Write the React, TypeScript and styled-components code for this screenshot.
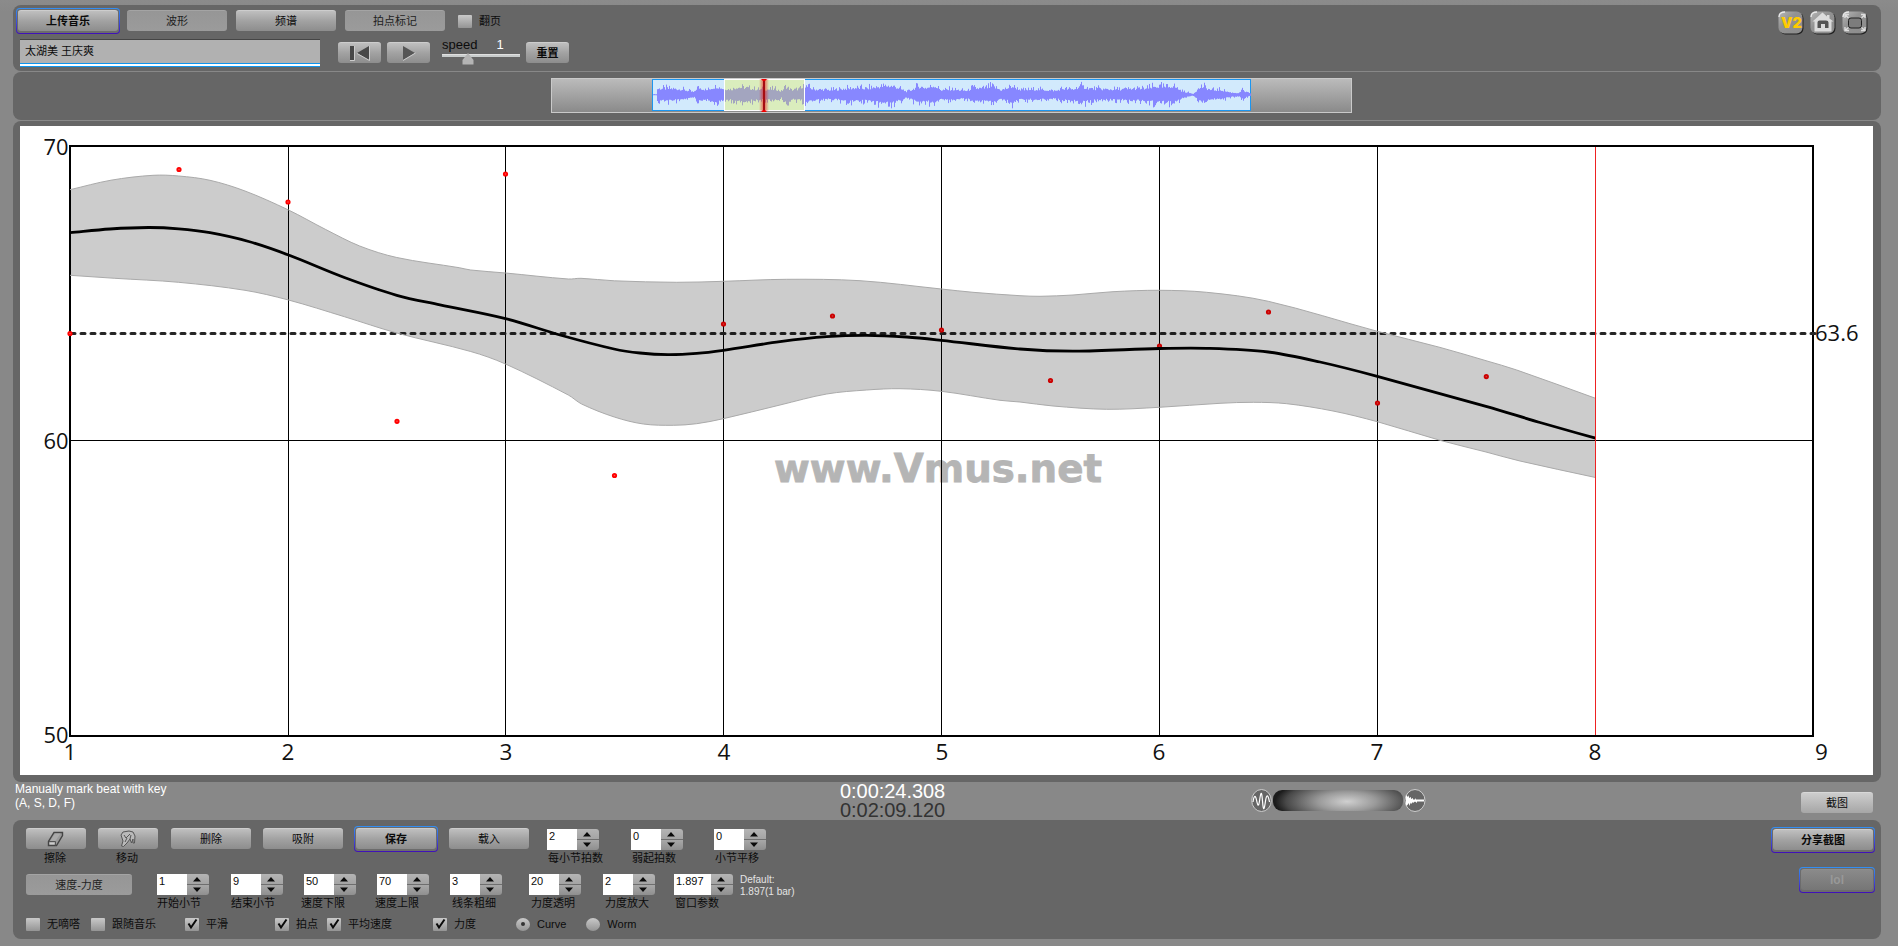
import styled, { createGlobalStyle, css } from 'styled-components';

const GlobalStyle = createGlobalStyle`
  body {
    margin: 0;
    background: #888;
    font-family: 'Liberation Sans', 'Noto Sans CJK SC', sans-serif;
    font-size: 11px;
    color: #0c0c0c;
    overflow: hidden;
  }
  * {
    box-sizing: border-box;
  }
`;

const Page = styled.div`
  width: 1898px;
  height: 946px;
  padding: 5px 17px 0 13px;
  display: flex;
  flex-direction: column;
  background: linear-gradient(#8b8b8b, #888 12px);
`;
const Panel = styled.section<{ $height: number; $gap?: number }>`
  height: ${({ $height }) => $height}px;
  margin-bottom: ${({ $gap }) => $gap ?? 0}px;
  flex-shrink: 0;
  border-radius: 8px;
  background: #666;
`;

const Header = styled(Panel)`
  display: flex;
  justify-content: space-between;
  padding: 3px 13px 0 3px;
`;
const HeaderRow = styled.div<{ $top?: number }>`
  display: flex;
  align-items: flex-start;
  margin-top: ${({ $top }) => $top ?? 0}px;
`;
const IconBar = styled.div`
  display: flex;
  gap: 6px;
  padding-top: 3px;
`;

const face = {
  up: css`
    background: linear-gradient(#bfbfbf, #a2a2a2 50%, #8d8d8d);
    border-top: 1px solid #cdcdcd;
  `,
  flat: css`
    background: linear-gradient(#969696, #9b9b9b);
    border-top: 1px solid #a4a4a4;
  `,
  bright: css`
    background: linear-gradient(#cdcdcd, #a6a6a6);
    border-top: 1px solid #d8d8d8;
  `,
  off: css`
    background: linear-gradient(#8a8a8a, #767676);
    border-top: 1px solid #8e8e8e;
    font-size: 12px;
  `,
};
const faceColor = { up: '#0a0a0a', flat: '#222', bright: '#0a0a0a', off: '#989898' };

const Button = styled.button<{
  $width: number;
  $left?: number;
  $top?: number;
  $face?: keyof typeof face;
  $bold?: boolean;
}>`
  width: ${({ $width }) => $width}px;
  height: 21px;
  margin: ${({ $top }) => $top ?? 0}px 0 0 ${({ $left }) => $left ?? 0}px;
  padding: 0;
  flex-shrink: 0;
  display: flex;
  align-items: center;
  justify-content: center;
  border: 0;
  border-radius: 3px;
  font: inherit;
  line-height: 16px;
  font-weight: ${({ $bold }) => ($bold ? 700 : 400)};
  color: ${({ $face }) => faceColor[$face ?? 'up']};
  ${({ $face }) => face[$face ?? 'up']}
`;
const Frame = styled.div<{ $left?: number; $top?: number }>`
  margin: ${({ $top }) => $top ?? 0}px 0 0 ${({ $left }) => $left ?? 0}px;
  padding: 1px;
  border-radius: 4px;
  background: linear-gradient(#3290f4, #3c4fdc 55%, #400fb8);
`;
const FrameInner = styled.div`
  padding: 1px 1px 2px;
  border-radius: 3px;
  background: #6c6c6c;
`;

const CheckLabel = styled.label<{ $left: number; $top?: number }>`
  display: flex;
  align-items: center;
  gap: 7px;
  height: 14px;
  line-height: 14px;
  white-space: nowrap;
  margin: ${({ $top }) => $top ?? 0}px 0 0 ${({ $left }) => $left}px;
`;
const CheckBox = styled.span<{ $round?: boolean }>`
  width: 14px;
  height: 13px;
  display: flex;
  align-items: center;
  justify-content: center;
  border-radius: ${({ $round }) => ($round ? '50%' : '1px')};
  background: linear-gradient(#c9c9c9, #949494);
`;
const RadioDot = styled.span`
  width: 4px;
  height: 4px;
  border-radius: 50%;
  background: #333;
`;

const SongName = styled.div`
  width: 300px;
  height: 28px;
  margin-left: 4px;
  padding: 3px 5px;
  border-top: 1px solid #454545;
  line-height: 16px;
  background: linear-gradient(#0f95ee 0 1px, #fff 1px 3px, #0f95ee 3px 4px) bottom / 100% 4px no-repeat #b1b1b1;
`;
const Speed = styled.div`
  width: 78px;
  margin-left: 12px;
  font-size: 13px;
`;
const SpeedText = styled.div`
  display: flex;
  height: 15px;
  line-height: 12px;
  span + span {
    margin-left: 19px;
    color: #fff;
  }
`;
const SpeedTrack = styled.div`
  height: 3px;
  background: #c8cccc;
  border-top: 1px solid #e0e0e0;
  svg {
    display: block;
    margin: -2px 0 0 20px;
  }
`;

const OverviewPanel = styled(Panel)`
  padding: 6px 0 0 538px;
`;
const Overview = styled.div`
  width: 801px;
  height: 35px;
  padding-left: 100px;
  border: 1px solid #cacaca;
  background: linear-gradient(#bbb, #8a8a8a);
`;
const WaveSvg = styled.svg`
  display: block;
`;

const ChartPanel = styled(Panel)`
  padding: 5px 8px 7px 7px;
`;
const ChartSvg = styled.svg`
  display: block;
  width: 1853px;
  height: 649px;
  background: #fff;
`;

const Status = styled.div`
  height: 38px;
  flex-shrink: 0;
  display: flex;
  align-items: flex-start;
`;
const Hint = styled.div`
  width: 827px;
  padding-left: 2px;
  font-size: 12px;
  line-height: 14px;
  color: #fff;
`;
const Times = styled.div`
  width: 411px;
  font-size: 20px;
  line-height: 19px;
  letter-spacing: -0.05px;
  color: #fff;
  div + div {
    color: #333;
  }
`;
const Zoomer = styled.div`
  display: flex;
  align-items: center;
  gap: 1px;
  padding-top: 7px;
  width: 550px;
`;
const ZoomDial = styled.div`
  width: 130px;
  height: 21px;
  border-radius: 9px;
  background: radial-gradient(ellipse 72px 24px at 57% 55%, #d0d0d0, #9a9a9a 40%, #484848 85%, #1c1c1c);
`;

const Controls = styled(Panel)`
  display: flex;
  justify-content: space-between;
  padding: 6px 6px 0 13px;
`;
const ControlRow = styled.div<{ $height: number }>`
  height: ${({ $height }) => $height}px;
  display: flex;
  align-items: flex-start;
`;
const FieldBox = styled.div<{ $left: number }>`
  margin: 3px 0 0 ${({ $left }) => $left}px;
  width: max-content;
`;
// Zero width: a caption may be wider than its stepper
const FieldCaption = styled.div<{ $shift: number }>`
  width: 0;
  margin: -1px 0 0 ${({ $shift }) => $shift}px;
  line-height: 16px;
  white-space: nowrap;
`;
const Tool = styled.div<{ $left?: number }>`
  margin: 2px 0 0 ${({ $left }) => $left ?? 0}px;
`;
const ToolCaption = styled.div`
  margin: 1px 2px 0 0;
  text-align: center;
  line-height: 17px;
`;
const Stepper = styled.div`
  display: flex;
  height: 22px;
`;
const StepperValue = styled.div<{ $width: number }>`
  width: ${({ $width }) => $width}px;
  height: 21px;
  padding: 1px 2px;
  background: #fff;
  line-height: 13px;
`;
const StepperArrows = styled.div`
  width: 22px;
  height: 21px;
  border-radius: 0 3px 3px 0;
  background: linear-gradient(#b4b4b4, #a4a4a4 10px, #6e6e6e 10px 11px, #a8a8a8 11px, #8f8f8f);
`;
const DefaultNote = styled.div`
  margin: 3px 0 0 7px;
  font-size: 10px;
  line-height: 12px;
  color: #e4e4e4;
`;
const Side = styled.div`
  display: flex;
  flex-direction: column;
  align-items: flex-end;
`;

type Point = [number, number];

// Catmull-Rom spline through the points, written as bezier segments
const spline = (pts: Point[]) =>
  pts
    .slice(1)
    .map(([x, y], i) => {
      const [x1, y1] = pts[i];
      const [x0, y0] = pts[i - 1] ?? pts[i];
      const [x3, y3] = pts[i + 2] ?? [x, y];
      const h = (x - x1) / 3;
      const m1 = x0 === x1 ? (y - y1) / (x - x1) : (y - y0) / (x - x0);
      const m2 = x3 === x ? (y - y1) / (x - x1) : (y3 - y1) / (x3 - x1);
      return `C${x1 + h} ${y1 + h * m1} ${x - h} ${y - h * m2} ${x} ${y}`;
    })
    .join('');

const mean: Point[] = [
  [70, 232.7], [110, 229], [148.5, 227.5], [178.7, 228.8], [210, 232.7], [248.7, 241.5], [288.5, 255], [344.4, 277.5],
  [396.8, 295.3], [440, 304.8], [505.5, 318.6], [560, 335], [614, 349], [640, 353], [668, 354.6], [696.7, 353.4],
  [723.3, 350.3], [780, 341.7], [826.7, 336.7], [866.7, 335.3], [906.7, 337], [941.3, 340.3], [1020, 349], [1075, 351.2],
  [1159.3, 348.5], [1206.7, 348.3], [1268.3, 352], [1320, 362], [1377.3, 376.3], [1486, 406.3], [1540, 422.5], [1595.5, 438.2],
];
const upper: Point[] = [
  [70, 189.7], [111, 180.2], [153, 175.3], [178.7, 176], [210, 180.3], [245, 191], [288.5, 210], [325.3, 229.3],
  [359.7, 246], [396.8, 257.5], [459.2, 267.7], [470.7, 270], [505.5, 273], [568.3, 279], [581, 278.3], [614.3, 280.8],
  [676.7, 282.3], [723.3, 281.3], [786.7, 279.3], [860, 280.7], [941.3, 289], [973, 292.3], [1020, 295.7], [1040, 296.3],
  [1073, 295], [1113, 291.7], [1159.3, 290.3], [1206.7, 292.3], [1268.3, 301.3], [1377.3, 331.3], [1440, 347.4],
  [1486, 360.7], [1516.7, 370], [1595.5, 398.3],
];
const lower: Point[] = [
  [70, 275.3], [114.8, 278.3], [178.7, 282.3], [245, 290.3], [288.5, 300], [344.4, 316.7], [396.8, 333], [470.7, 351.5],
  [505.5, 364], [568.3, 395], [581.6, 404], [614.3, 417], [643.3, 424], [673.3, 425.3], [696.7, 423.7], [723.3, 418.7],
  [780, 405], [826.7, 394], [866.7, 390], [900, 388.7], [941.3, 391.3], [1000, 400.3], [1020, 402], [1053, 406],
  [1106.7, 409.3], [1159.3, 407.3], [1220, 403.3], [1253.3, 402.3], [1286.7, 403.7], [1333, 411], [1377.3, 421.7],
  [1440, 440.3], [1486, 452], [1520, 461], [1595.5, 477.5],
];
const beats: Point[] = [
  [70, 333.5], [179, 169.5], [288, 202], [397, 421.3], [505.5, 174], [614.5, 475.5], [723.5, 324], [832.5, 316],
  [941.5, 330], [1050.5, 380.5], [1159.5, 346], [1268.5, 312], [1377.5, 403], [1486.3, 376.6],
];
const gridX = [288.5, 505.5, 723.5, 941.5, 1159.5, 1377.5];
const barX = [70, 288, 506, 724, 942, 1159, 1377, 1595, 1821.5];
const tempoMarks = [
  { label: '70', y: 155 },
  { label: '60', y: 449 },
  { label: '50', y: 743 },
];

const start = (pts: Point[]) => `${pts[0][0]} ${pts[0][1]}`;
const lowerBack = [...lower].reverse();
const bandPath = `M${start(upper)}${spline(upper)}L${start(lowerBack)}${spline(lowerBack)}Z`;

const TempoChart = () => (
  <ChartSvg viewBox='20 126 1853 649' fontFamily="'Open Sans', 'Noto Sans', sans-serif" fontSize='22.5'>
    <text
      x='774'
      y='481.5'
      textLength='328'
      lengthAdjust='spacingAndGlyphs'
      fontFamily="'DejaVu Sans', sans-serif"
      fontWeight='700'
      fontSize='38.5'
      fill='#b5b5b5'
      stroke='#b5b5b5'
      strokeWidth='0.8'
    >
      www.Vmus.net
    </text>
    {gridX.map((x) => (
      <path key={x} d={`M${x} 146V736`} stroke='#000' />
    ))}
    <path d='M70 440.5H1813' stroke='#000' />
    <rect x='70' y='146' width='1743' height='590' fill='none' stroke='#000' strokeWidth='2' />
    <path d='M71 333.5H1816' stroke='#262626' strokeWidth='3' strokeDasharray='4 6' strokeLinecap='round' />
    {beats.map(([x, y]) => (
      <circle key={x} cx={x} cy={y} r='1.7' fill='#ff5050' stroke='#f00' strokeWidth='1.8' />
    ))}
    <path d={bandPath} fill='#000' fillOpacity='0.2' />
    <path d={`M${start(upper)}${spline(upper)}`} fill='none' stroke='#aaa' />
    <path d={`M${start(lower)}${spline(lower)}`} fill='none' stroke='#aaa' />
    <path d={`M${start(mean)}${spline(mean)}`} fill='none' stroke='#000' strokeWidth='2.8' />
    <path d='M1595.5 147V735' stroke='#e22' />
    <g fill='#111'>
      {tempoMarks.map(({ label, y }) => (
        <text key={label} x='68.5' y={y} textAnchor='end' textLength='25' lengthAdjust='spacingAndGlyphs'>
          {label}
        </text>
      ))}
      <text x='1815' y='341' textLength='43.5' lengthAdjust='spacingAndGlyphs'>
        63.6
      </text>
      {barX.map((x, i) => (
        <text key={x} x={x} y='760' textAnchor='middle'>
          {i + 1}
        </text>
      ))}
    </g>
  </ChartSvg>
);

// Loudness envelope of the recording: x, half height
const envelope: Point[] = [
  [651, 0.4], [655, 0.4], [656, 8], [670, 8], [680, 7], [690, 4], [693, 3], [696, 10], [705, 6], [715, 11], [722, 8],
  [730, 7], [736, 10], [745, 9], [755, 7], [764, 7], [775, 7], [780, 4], [784, 11], [790, 6], [800, 8], [804, 12],
  [812, 7], [830, 6], [845, 8], [855, 9], [865, 8], [880, 11], [885, 12], [893, 11], [900, 7], [906, 3.5], [917, 11],
  [925, 9], [933, 12], [940, 6], [950, 7], [957, 6], [967, 5], [970, 9], [980, 8], [991, 11], [1000, 6], [1011, 11],
  [1020, 6], [1035, 7], [1055, 5], [1060, 8], [1072, 7], [1078, 11], [1090, 8], [1105, 7], [1120, 7], [1135, 8],
  [1145, 8], [1155, 11], [1165, 10], [1172, 12], [1180, 5], [1185, 3], [1192, 1], [1194, 4], [1200, 11], [1210, 6],
  [1220, 6], [1230, 2.5], [1238, 2], [1240, 6], [1250, 0.5], [1252, 0.3],
];
const loudness = (x: number) => {
  const i = Math.max(1, envelope.findIndex(([ex]) => ex >= x));
  const [ax, ay] = envelope[i - 1];
  const [bx, by] = envelope[i];
  return ay + ((by - ay) * (x - ax)) / (bx - ax);
};
const noise = (n: number) => {
  const v = Math.sin(n * 12.9898) * 43758.5453;
  const r = v - Math.floor(v);
  return 0.55 + 0.3 * r + 0.4 * r ** 6;
};
const wavePath = Array.from({ length: 598 }, (_, i) => {
  const a = loudness(652 + i);
  const up = a * noise(i);
  const down = a * noise(i + 977);
  return `M${i + 1.5} ${15.5 - up}V${16 + down}`;
}).join('');

const Waveform = () => (
  <WaveSvg width='602' height='33' viewBox='0 0 602 33'>
    <defs>
      <linearGradient id='glow'>
        <stop offset='0' stopColor='#e00' stopOpacity='0' />
        <stop offset='0.5' stopColor='#e00' stopOpacity='0.6' />
        <stop offset='1' stopColor='#e00' stopOpacity='0' />
      </linearGradient>
    </defs>
    <rect x='0.5' y='0.5' width='598' height='31' fill='#d2eafc' stroke='#1c96f0' />
    <path d={wavePath} stroke='#8787ff' />
    <rect x='72.5' y='0.5' width='80' height='31' fill='#f0f814' fillOpacity='0.27' />
    <rect x='72.5' y='0.5' width='80' height='31' fill='none' stroke='#fff' />
    <rect x='107' y='0' width='10' height='32' fill='url(#glow)' />
    <path d='M112 0V32' stroke='#a50d12' strokeWidth='2' />
    <path d='M109 0h6l-2 2h-2zM109 33h6l-2-2h-2z' fill='#e00' />
  </WaveSvg>
);

const IconPlate = ({ id }: { id: string }) => (
  <>
    <defs>
      <linearGradient id={id} x2='1' y2='1'>
        <stop offset='0' stopColor='#b8b8b8' />
        <stop offset='0.4' stopColor='#929292' />
        <stop offset='1' stopColor='#8c8c8c' />
      </linearGradient>
    </defs>
    <rect x='1.5' y='1.5' width='24' height='22' rx='6' fill='#222' />
    <rect x='0.5' y='0.5' width='24' height='22' rx='6' fill={`url(#${id})`} />
    <path d='M1 6Q1 1 7 1' fill='none' stroke='#e8e8e8' strokeWidth='1.4' />
  </>
);

const TopIcons = () => (
  <IconBar>
    <svg width='26' height='24'>
      <IconPlate id='plate-v2' />
      <text
        x='3'
        y='17'
        textLength='21'
        lengthAdjust='spacingAndGlyphs'
        fontFamily='Inter, sans-serif'
        fontWeight='900'
        fontSize='15'
        fill='#ffcb00'
      >
        V2
      </text>
    </svg>
    <svg width='26' height='24'>
      <IconPlate id='plate-home' />
      <path d='M12.5 1.5L2.5 10.5H4.500V20.500H21.500V10.500H23.500L19.500 7.500V4H17V5.500Z' fill='#dcdcdc' />
      <path d='M7.500 17V11.500Q7.500 9.500 9.500 9.500H16Q18.500 9.500 18.500 11.500V17H15V13H11V17Z' fill='#555' />
    </svg>
    <svg width='26' height='24'>
      <IconPlate id='plate-full' />
      <rect x='6.500' y='7' width='13' height='10' rx='2.500' fill='#7c7c7c' stroke='#222' />
      <path
        d='M3 7V3.5H7M3 3.5L6.500 7M19 3.5H23V7M23 3.500L19.500 7M3 16V19.500H7M3 19.500L6.500 16.500M19 19.500H23V16M23 19.500L19.500 16.500'
        fill='none'
        stroke='#ddd'
        strokeWidth='1.4'
      />
    </svg>
  </IconBar>
);

type CheckProps = { label: string; left: number; top?: number; checked?: boolean };
const Check = ({ label, left, top, checked }: CheckProps) => (
  <CheckLabel $left={left} $top={top}>
    <CheckBox>
      {checked && (
        <svg width='12' height='12'>
          <path d='M2.5 5.5L5 9.5L10.5 1.5' fill='none' stroke='#0a0a0a' strokeWidth='2' />
        </svg>
      )}
    </CheckBox>
    {label}
  </CheckLabel>
);
const Radio = ({ label, left, checked }: CheckProps) => (
  <CheckLabel $left={left}>
    <CheckBox $round>{checked && <RadioDot />}</CheckBox>
    {label}
  </CheckLabel>
);

type FieldProps = { value: string; label: string; left: number; shift?: number; width?: number };
const Field = ({ value, label, left, shift = 2, width = 30 }: FieldProps) => (
  <FieldBox $left={left}>
    <Stepper>
      <StepperValue $width={width}>{value}</StepperValue>
      <StepperArrows>
        <svg width='22' height='21'>
          <path d='M6 7.5L10 3L14 7.5ZM6 13.5L10 18L14 13.5Z' fill='#0a0a0a' />
        </svg>
      </StepperArrows>
    </Stepper>
    <FieldCaption $shift={shift}>{label}</FieldCaption>
  </FieldBox>
);

const App = () => {
  return (
    <>
      <GlobalStyle />
      <Page>
        <Header $height={66} $gap={1}>
          <div>
            <HeaderRow>
              <Frame>
                <FrameInner>
                  <Button $width={100} $bold>上传音乐</Button>
                </FrameInner>
              </Frame>
              <Button $width={100} $left={7} $top={2} $face='flat'>波形</Button>
              <Button $width={100} $left={9} $top={2}>频谱</Button>
              <Button $width={100} $left={9} $top={2} $face='flat'>拍点标记</Button>
              <Check label='翻页' left={13} top={6} />
            </HeaderRow>
            <HeaderRow $top={5}>
              <SongName>太湖美 王庆爽</SongName>
              <Button $width={43} $left={18} $top={3}>
                <svg width='22' height='17'>
                  <path d='M1 1H5V15H1ZM20 1V15L8 8Z' fill='#484848' />
                  <path d='M5.5 1V15.5H1M20.5 1V15.5L8 8.5' fill='none' stroke='#ccc' />
                </svg>
              </Button>
              <Button $width={43} $left={6} $top={3}>
                <svg width='16' height='17'>
                  <path d='M2 1V15L14 8Z' fill='#555' />
                  <path d='M2 15.5L14.5 8' fill='none' stroke='#ccc' />
                </svg>
              </Button>
              <Speed>
                <SpeedText>
                  <span>speed</span>
                  <span>1</span>
                </SpeedText>
                <SpeedTrack>
                  <svg width='12' height='12'>
                    <path d='M6 0L11.5 7V11.500H0.5V7Z' fill='#b4b4b4' />
                  </svg>
                </SpeedTrack>
              </Speed>
              <Button $width={43} $left={6} $top={3} $bold>重置</Button>
            </HeaderRow>
          </div>
          <TopIcons />
        </Header>

        <OverviewPanel $height={48} $gap={1}>
          <Overview>
            <Waveform />
          </Overview>
        </OverviewPanel>

        <ChartPanel $height={661}>
          <TempoChart />
        </ChartPanel>

        <Status>
          <Hint>
            Manually mark beat with key
            <br />
            (A, S, D, F)
          </Hint>
          <Times>
            <div>0:00:24.308</div>
            <div>0:02:09.120</div>
          </Times>
          <Zoomer>
            <svg width='21' height='23'>
              <ellipse cx='10.5' cy='11.5' rx='9.8' ry='11' fill='#666' stroke='#ccc' />
              <path
                d='M2 13C3 6 4.5 6 5.5 11S7.5 19 8.5 12S10.5 -1 11.5 12S13.5 19 14.5 12S17 5 18.5 13'
                fill='none'
                stroke='#fff'
                strokeWidth='1.2'
              />
            </svg>
            <ZoomDial />
            <svg width='22' height='23'>
              <ellipse cx='11' cy='11.5' rx='10' ry='11' fill='#666' stroke='#ccc' />
              <path
                d='M2 6L4 8L5 6V9L7 8V10L9 9V10.5H11L12 9V10.5H20V12.5H13V14L11 12.5L9 14V13L7 15V13.5L5 17V14L3 16.5H2Z'
                fill='#fff'
              />
            </svg>
          </Zoomer>
          <Button $width={72} $top={10} $face='bright'>截图</Button>
        </Status>

        <Controls $height={119}>
          <div>
            <ControlRow $height={45}>
              <Tool>
                <Button $width={60}>
                  <svg width='18' height='17'>
                    <path d='M7 1.5H15.5V4.500L9.500 14.500H1.500V10.500Z' fill='#9a9a9a' stroke='#444' strokeWidth='1.4' />
                    <path d='M3 10.500H8L13.500 2.500H8Z' fill='#aaa' />
                    <path d='M2 10.500H8.500V14.500' fill='none' stroke='#555' />
                    <path d='M2.500 11.500H7.500V13.500H2.500Z' fill='#ccc' />
                  </svg>
                </Button>
                <ToolCaption>擦除</ToolCaption>
              </Tool>
              <Tool $left={12}>
                <Button $width={60}>
                  <svg width='18' height='18'>
                    <path
                      d='M2.5 16L4 11L2 5L4 2L10 1L14 2L16 6L15.5 13L14 13V9L12.5 13L11 9L8 13L4.5 16.5Z'
                      fill='#b9b9b9'
                      stroke='#555'
                      strokeLinejoin='round'
                    />
                    <path d='M5 5L7 8L11 4M8 8L6 12M12 5L11 9' fill='none' stroke='#555' />
                  </svg>
                </Button>
                <ToolCaption>移动</ToolCaption>
              </Tool>
              <Button $width={80} $left={13} $top={2}>删除</Button>
              <Button $width={80} $left={12} $top={2}>吸附</Button>
              <Frame $left={11}>
                <FrameInner>
                  <Button $width={80} $bold>保存</Button>
                </FrameInner>
              </Frame>
              <Button $width={80} $left={11} $top={2}>载入</Button>
              <Field value='2' label='每小节拍数' left={18} shift={1} />
              <Field value='0' label='弱起拍数' left={32} shift={1} />
              <Field value='0' label='小节平移' left={31} shift={1} />
            </ControlRow>
            <ControlRow $height={46}>
              <Button $width={106} $top={3} $face='flat'>速度-力度</Button>
              <Field value='1' label='开始小节' left={25} shift={0} />
              <Field value='9' label='结束小节' left={22} shift={0} />
              <Field value='50' label='速度下限' left={21} shift={-3} />
              <Field value='70' label='速度上限' left={21} shift={-2} />
              <Field value='3' label='线条粗细' left={21} />
              <Field value='20' label='力度透明' left={27} />
              <Field value='2' label='力度放大' left={22} />
              <Field value='1.897' label='窗口参数' left={19} width={37} shift={1} />
              <DefaultNote>
                Default:
                <br />
                1.897(1 bar)
              </DefaultNote>
            </ControlRow>
            <ControlRow $height={14}>
              <Check label='无嘀嗒' left={0} />
              <Check label='跟随音乐' left={11} />
              <Check label='平滑' left={29} checked />
              <Check label='拍点' left={47} checked />
              <Check label='平均速度' left={9} checked />
              <Check label='力度' left={41} checked />
              <Radio label='Curve' left={40} checked />
              <Radio label='Worm' left={20} />
            </ControlRow>
          </div>
          <Side>
            <Frame $top={1}>
              <FrameInner>
                <Button $width={100} $bold>分享截图</Button>
              </FrameInner>
            </Frame>
            <Frame $top={14}>
              <FrameInner>
                <Button $width={72} $face='off' $bold>lol</Button>
              </FrameInner>
            </Frame>
          </Side>
        </Controls>
      </Page>
    </>
  );
};

export default App;
